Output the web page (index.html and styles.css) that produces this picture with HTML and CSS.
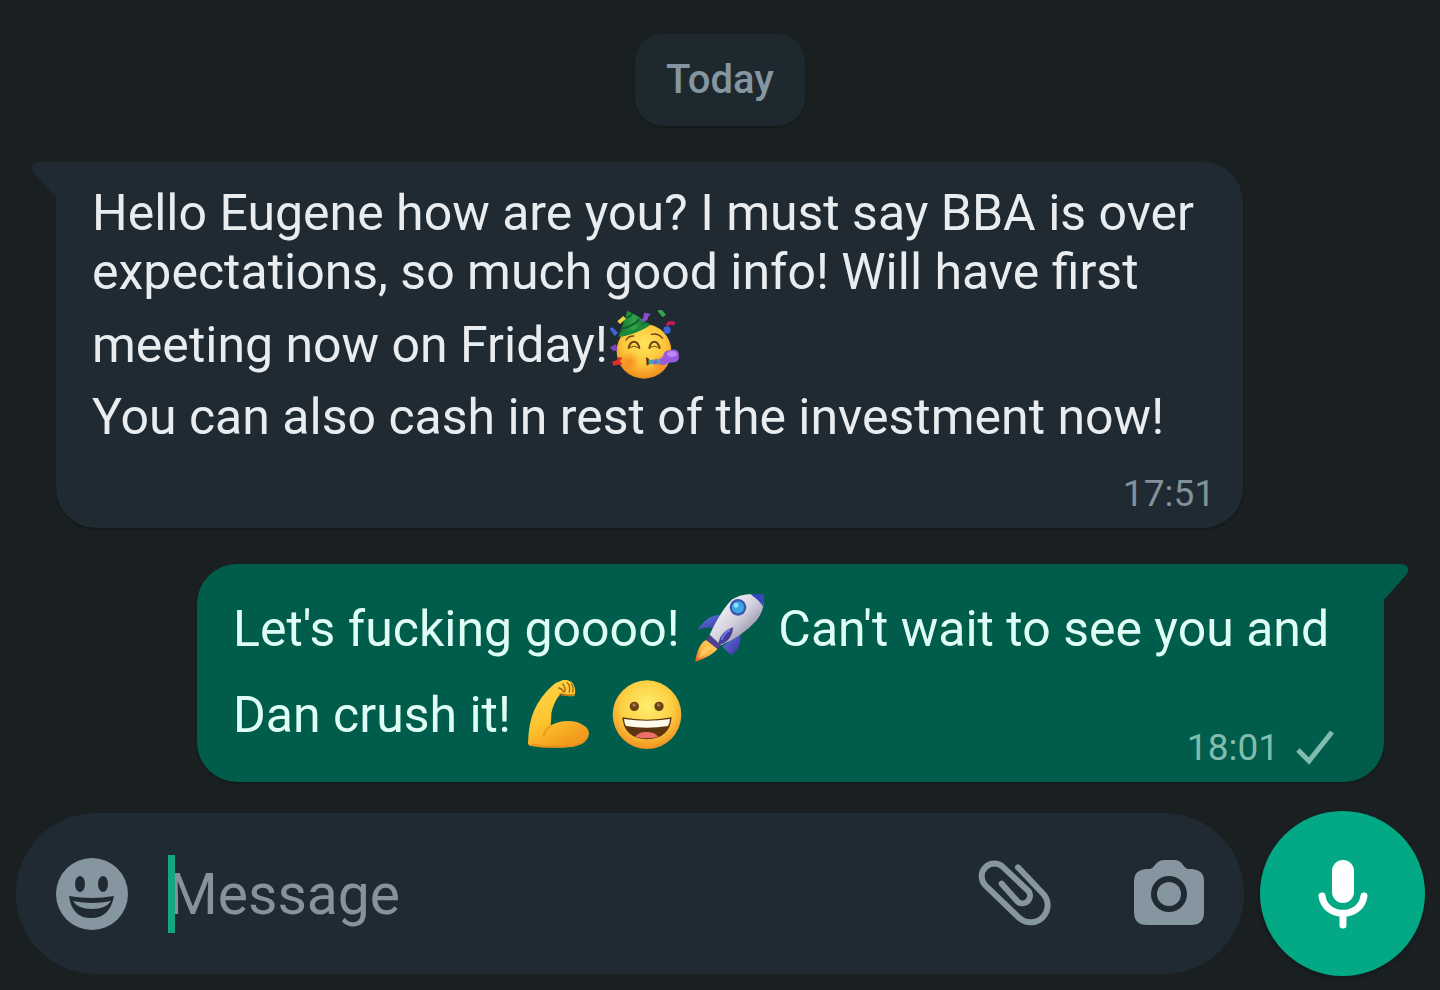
FILE: index.html
```html
<!DOCTYPE html>
<html lang="en">
<head>
    <meta charset="UTF-8">
    <meta name="viewport" content="width=device-width, initial-scale=1.0">
    <title>Chat</title>
    <link rel="stylesheet" href="styles.css">
</head>
<body>
    <main class="chat">
        <div class="day">Today</div>

        <!-- Incoming message -->
        <article class="bubble incoming">
            <svg class="tail" viewBox="0 0 26 38" aria-hidden="true">
                <path d="M26 0H7C0 0-2 6 2 11L26 38Z"/>
            </svg>
            <p>Hello Eugene how are you? I must say BBA is over expectations, so much good info! Will have first meeting now on Friday!<svg class="emoji" viewBox="36 30 210 210" role="img" aria-label="Party face">
                <defs>
                    <radialGradient id="partyFace" cx="50%" cy="35%" r="65%">
                        <stop offset="0" stop-color="#ffe45c"/>
                        <stop offset="0.6" stop-color="#fdc53a"/>
                        <stop offset="1" stop-color="#ee8c1c"/>
                    </radialGradient>
                    <radialGradient id="blush">
                        <stop offset="0" stop-color="#f5821f" stop-opacity="0.8"/>
                        <stop offset="1" stop-color="#f5821f" stop-opacity="0"/>
                    </radialGradient>
                    <linearGradient id="hat">
                        <stop offset="0" stop-color="#14702c"/>
                        <stop offset="0.5" stop-color="#2fa34c"/>
                        <stop offset="1" stop-color="#0c5a25"/>
                    </linearGradient>
                </defs>
                <circle cx="138" cy="154" r="82" fill="url(#partyFace)"/>
                <circle cx="94" cy="186" r="32" fill="url(#blush)"/>
                <circle cx="186" cy="190" r="26" fill="url(#blush)"/>
                <path d="M88 32L62 110Q104 108 156 76L124 51Z" fill="url(#hat)"/>
                <path d="M70 86Q100 82 124 58M82 54Q96 52 104 40" fill="none" stroke="#0d5e28" stroke-width="5"/>
                <path d="M62 110Q104 108 156 76L150 68Q104 96 65 98Z" fill="#1c8a3c"/>
                <g fill="none" stroke="#6d4413" stroke-width="6" stroke-linecap="round">
                    <path d="M92 144Q96 125 108 125T124 144M154 144Q158 125 169 125T185 144"/>
                    <path d="M84 120Q92 107 107 108M160 103Q180 98 194 115" stroke-width="4"/>
                    <path d="M97 142Q108 134 119 142M158 142Q169 134 180 142" stroke-width="3"/>
                </g>
                <path d="M144 172Q158 176 152 184Q160 192 146 197Z" fill="#5d3510"/>
                <path d="M152 180L200 176V192L152 193Z" fill="#3fa9ad"/>
                <path d="M168 179L176 178V193H168Z" fill="#8a55d8"/>
                <path d="M186 176Q196 172 198 159Q204 149 218 151Q236 144 242 160Q246 184 230 187Q205 187 200 196L187 194Z" fill="#9a5be0"/>
                <ellipse cx="222" cy="162" rx="15" ry="9" fill="#bd85f5"/>
                <path d="M58 64L76 48L84 56L66 72Z" fill="#e9d53f"/>
                <path d="M130 60Q138 54 138 38L158 42Q150 48 148 60L136 66Z" fill="#8d4ed0"/>
                <path d="M178 32L190 28L204 44L194 52Z" fill="#35a64e"/>
                <path d="M204 72Q212 58 232 66L228 77Q214 70 208 80Z" fill="#c41d55"/>
                <circle cx="207" cy="90" r="11" fill="#3b62d9"/>
                <path d="M34 86L44 82L60 98L50 108Z" fill="#3f66d8"/>
                <path d="M36 142L54 132L58 150L46 154Z" fill="#7a45bd"/>
                <path d="M42 184Q58 184 62 170L73 174L66 184L74 192L46 197Z" fill="#df2f2a"/>
            </svg><br>You can also cash in rest of the investment now!</p>
            <div class="meta"><time>17:51</time></div>
        </article>

        <!-- Outgoing message -->
        <article class="bubble outgoing">
            <svg class="tail" viewBox="0 0 26 38" aria-hidden="true">
                <path d="M0 0H19C26 0 28 6 24 11L0 38Z"/>
            </svg>
            <p>Let's fucking goooo! <svg class="emoji" viewBox="39 42 210 210" role="img" aria-label="Rocket">
                <defs>
                    <linearGradient id="hull" x1="0" y1="0" x2="1" y2="1">
                        <stop offset="0.2" stop-color="#f4f2f8"/>
                        <stop offset="0.5" stop-color="#d3d0dd"/>
                        <stop offset="0.8" stop-color="#8f8aa5"/>
                    </linearGradient>
                    <linearGradient id="fin" x1="0" y1="0" x2="1" y2="1">
                        <stop offset="0" stop-color="#5f7ce6"/>
                        <stop offset="1" stop-color="#3a2f9e"/>
                    </linearGradient>
                    <linearGradient id="flame" x1="1" y1="0" x2="0" y2="1">
                        <stop offset="0" stop-color="#ffd56b"/>
                        <stop offset="0.6" stop-color="#ffb13c"/>
                        <stop offset="1" stop-color="#d9581d"/>
                    </linearGradient>
                </defs>
                <path d="M130 106Q82 98 50 150Q76 138 102 146Z" fill="url(#fin)"/>
                <path d="M176 160Q186 202 150 226L124 200Z" fill="url(#fin)"/>
                <path d="M42 246Q52 190 76 180L110 206Q96 226 42 246Z" fill="url(#flame)"/>
                <path d="M52 234Q66 200 82 196L92 204Q82 220 52 234Z" fill="#ffc95c"/>
                <path d="M86 164L120 196L110 208L76 180Z" fill="#51408f"/>
                <path d="M86 164Q122 88 154 58Q190 36 246 44Q256 84 226 122Q184 168 120 196Z" fill="url(#hull)"/>
                <path d="M208 43Q232 39 247 43Q252 60 246 80Q238 64 208 43Z" fill="#3349b8"/>
                <circle cx="171" cy="82" r="25" fill="#3f55b0"/>
                <circle cx="171" cy="82" r="18" fill="#39a9e4"/>
                <circle cx="165" cy="76" r="7" fill="#9be2fa"/>
                <path d="M112 196Q114 158 156 142Q154 184 112 196Z" fill="#463a9f"/>
                <path d="M122 180Q128 158 148 150" fill="none" stroke="#6d8ae9" stroke-width="5"/>
            </svg> Can't wait to see you and Dan crush it! <svg class="emoji" viewBox="45 42 210 210" role="img" aria-label="Flexed arm">
                <defs>
                    <linearGradient id="skin" x1="0" y1="0" x2="0.5" y2="1">
                        <stop offset="0" stop-color="#ffd94e"/>
                        <stop offset="0.6" stop-color="#fdc42f"/>
                        <stop offset="1" stop-color="#f29a1c"/>
                    </linearGradient>
                </defs>
                <path d="M54 230Q56 170 72 134Q92 90 126 60Q136 50 150 46Q164 38 176 44Q190 48 192 60Q199 72 193 90Q172 92 150 86Q132 104 124 142Q124 160 122 178Q160 158 200 168Q236 180 237 202Q234 234 190 242Q122 250 64 240Q54 238 54 230Z" fill="url(#skin)"/>
                <path d="M122 180Q106 190 101 210" fill="none" stroke="#e9951c" stroke-width="5" stroke-linecap="round"/>
                <path d="M64 236Q130 246 192 238Q222 230 232 212" fill="none" stroke="#e58a1d" stroke-width="6" stroke-linecap="round" opacity="0.7"/>
                <path d="M150 84Q168 90 192 86M158 54Q168 64 164 78M172 50Q182 60 178 78M184 54Q192 64 188 78M146 66Q158 68 160 78" fill="none" stroke="#a8650f" stroke-width="4" stroke-linecap="round"/>
            </svg> <svg class="emoji" viewBox="300 42 210 210" role="img" aria-label="Grinning face">
                <defs>
                    <radialGradient id="grin" cx="50%" cy="38%" r="62%">
                        <stop offset="0" stop-color="#ffee6e"/>
                        <stop offset="0.6" stop-color="#fdcf42"/>
                        <stop offset="1" stop-color="#f0921f"/>
                    </radialGradient>
                </defs>
                <circle cx="405" cy="146" r="103" fill="url(#grin)"/>
                <circle cx="367" cy="121" r="14" fill="#6b4416"/>
                <circle cx="441" cy="121" r="14" fill="#6b4416"/>
                <circle cx="366" cy="117" r="5" fill="#a47a45"/>
                <circle cx="440" cy="117" r="5" fill="#a47a45"/>
                <path d="M331 154Q405 168 479 154Q474 218 405 220Q336 218 331 154Z" fill="#5c3410"/>
                <path d="M336 159Q405 170 474 159Q473 172 468 180Q405 190 342 180Q337 172 336 159Z" fill="#fffbea"/>
                <path d="M370 212Q380 197 405 198T438 212Q405 222 370 212Z" fill="#ee6f68"/>
            </svg></p>
            <div class="meta">
                <time>18:01</time>
                <svg class="check" viewBox="0 0 40 36" role="img" aria-label="Sent">
                    <path d="M3 20L14 31L37 2"/>
                </svg>
            </div>
        </article>
    </main>

    <!-- Message composer -->
    <form class="composer">
        <div class="field">
            <button type="button" class="icon-button emoji-button" aria-label="Emoji">
                <svg viewBox="0 0 72 72">
                    <circle cx="36" cy="36" r="36" class="fill"/>
                    <ellipse cx="24" cy="26" rx="5" ry="8" class="hole"/>
                    <ellipse cx="47" cy="26" rx="5" ry="8" class="hole"/>
                    <path d="M13 38Q36 42 58 38Q54 60 35 60T13 38Z" class="hole"/>
                    <path d="M17 43Q36 47 55 43Q50 51 36 51T17 43Z" class="fill"/>
                </svg>
            </button>
            <div class="entry">
                <input type="text" id="message" name="message" placeholder="Message" aria-label="Message">
                <span class="caret"></span>
            </div>
            <button type="button" class="icon-button clip-button" aria-label="Attach">
                <svg viewBox="52 62 222 200">
                    <path d="M172 84L248 164A51 51 0 0 1 176 236L74 138A38 38 0 0 1 128 84L204 156A23 23 0 0 1 172 188L123 133" class="line"/>
                </svg>
            </button>
            <button type="button" class="icon-button camera-button" aria-label="Camera">
                <svg viewBox="0 0 70 66">
                    <path d="M12 9H16Q19 8 21 5Q25 0 30 0H40Q46 0 49 5Q51 8 54 9H58Q70 10 70 21V52Q70 65 57 65H13Q0 65 0 52V21Q0 10 12 9Z" class="fill"/>
                    <circle cx="35" cy="34" r="18" class="hole"/>
                    <circle cx="35" cy="34" r="12" class="fill"/>
                </svg>
            </button>
        </div>
        <button type="button" class="mic-button" aria-label="Record voice message">
            <svg viewBox="0 0 50 70">
                <rect x="14" y="1" width="22" height="43" rx="11" fill="#fff"/>
                <path d="M4 37C7 60 43 60 46 37M25 55V66" fill="none" stroke="#fff" stroke-width="7" stroke-linecap="round"/>
            </svg>
        </button>
    </form>
</body>
</html>
```
FILE: styles.css
```css
* {
    box-sizing: border-box;
}

body {
    margin: 0;
    min-height: 100vh;
    display: flex;
    flex-direction: column;
    background-color: #1a2022;
    color: #e9edef;
    font-family: Roboto, sans-serif;
}

/* Conversation */
.chat {
    flex: 1;
    display: flex;
    flex-direction: column;
    gap: 36px;
    padding: 34px 56px 28px;
}

.day {
    align-self: center;
    padding: 22px 31px;
    border-radius: 28px;
    background-color: #1e282f;
    box-shadow: 0 2px 2px rgba(0, 0, 0, 0.2);
    color: #8696a0;
    font-size: 40px;
    font-weight: 500;
    line-height: 48px;
}

.bubble {
    position: relative;
    padding: 22px 28px 12px 36px;
    border-radius: 40px;
    box-shadow: 0 2px 2px rgba(0, 0, 0, 0.25);
    font-size: 50px;
    line-height: 59px;
}

.bubble p {
    margin: 0;
}

.incoming {
    margin-right: 141px;
    border-top-left-radius: 0;
    background-color: #1f2a32;
}

.outgoing {
    margin-left: 141px;
    border-top-right-radius: 0;
    background-color: #005d4b;
    color: #dffcf5;
}

/* Bubble corner that sticks out at the side */
.tail {
    position: absolute;
    top: 0;
    width: 26px;
    height: 38px;
}

.incoming .tail {
    left: -24px;
    fill: #1f2a32;
}

.outgoing .tail {
    right: -24px;
    fill: #005d4b;
}

.emoji {
    width: 70px;
    height: 70px;
    margin: 8px 2px;
    vertical-align: -26px;
}

.meta {
    display: flex;
    justify-content: flex-end;
    align-items: center;
    gap: 16px;
    margin-top: 24px;
    color: #82919a;
    font-size: 37px;
    line-height: 45px;
}

.outgoing .meta {
    margin-top: -33px;
    padding-right: 21px;
    color: #82bcae;
}

.check {
    width: 40px;
    height: 36px;
    fill: none;
    stroke: #82bcae;
    stroke-width: 5;
}

/* Composer */
.composer {
    display: flex;
    align-items: center;
    gap: 16px;
    padding: 0 15px 14px 16px;
}

.field {
    flex: 1;
    display: flex;
    align-items: center;
    min-width: 0;
    height: 161px;
    padding: 0 40px;
    border-radius: 80px;
    background-color: #1f2a32;
}

button {
    padding: 0;
    border: none;
    background: none;
    cursor: pointer;
}

button svg {
    display: block;
    width: 100%;
}

.icon-button {
    flex: none;
}

.fill {
    fill: #8696a0;
}

.hole {
    fill: #1f2a32;
}

.line {
    fill: none;
    stroke: #8696a0;
    stroke-width: 18;
    stroke-linecap: round;
}

.emoji-button {
    width: 72px;
}

.clip-button {
    width: 74px;
}

.camera-button {
    width: 70px;
    margin-left: 82px;
    padding-bottom: 2px;
}

.entry {
    position: relative;
    flex: 1;
    min-width: 0;
    margin-left: 40px;
}

.entry input {
    display: block;
    width: 100%;
    height: 78px;
    padding: 2px 0 0;
    border: none;
    outline: none;
    background: none;
    color: #e9edef;
    font-family: inherit;
    font-size: 57px;
}

.entry input::placeholder {
    color: #84939c;
    opacity: 1;
}

.caret {
    position: absolute;
    top: 0;
    left: 0;
    width: 7px;
    height: 78px;
    background-color: #14a683;
}

.mic-button {
    flex: none;
    display: flex;
    align-items: center;
    justify-content: center;
    width: 165px;
    height: 165px;
    border-radius: 50%;
    background-color: #03a985;
    box-shadow: 0 2px 4px rgba(0, 0, 0, 0.3);
}

.mic-button svg {
    width: 50px;
}
```
